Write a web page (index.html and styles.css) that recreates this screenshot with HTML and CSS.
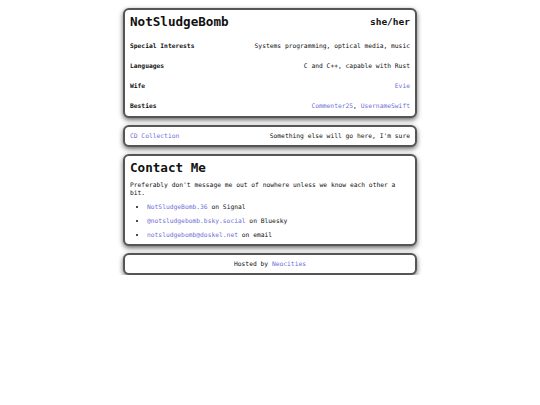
FILE: index.html
```html
<!DOCTYPE html>
<html>
<head>
<meta charset="utf-8">
<link rel="stylesheet" href="styles.css">
</head>
<body>
<main class="page">
  <section class="card profile">
    <header class="profile-head">
      <h1 class="name">NotSludgeBomb</h1>
      <span class="pronouns">she/her</span>
    </header>
    <div class="row"><span class="label">Special Interests</span><span class="value">Systems programming, optical media, music</span></div>
    <div class="row"><span class="label">Languages</span><span class="value">C and C++, capable with Rust</span></div>
    <div class="row"><span class="label">Wife</span><span class="value"><a href="#">Evie</a></span></div>
    <div class="row"><span class="label">Besties</span><span class="value"><a href="#">Commenter25</a>, <a href="#">UsernameSwift</a></span></div>
  </section>
  <section class="card strip">
    <a href="#">CD Collection</a>
    <span>Something else will go here, I'm sure</span>
  </section>
  <section class="card contact">
    <h2 class="heading">Contact Me</h2>
    <p class="intro">Preferably don't message me out of nowhere unless we know each other a bit.</p>
    <ul class="links">
      <li><a href="#">NotSludgeBomb.36</a> on Signal</li>
      <li><a href="#">@notsludgebomb.bsky.social</a> on Bluesky</li>
      <li><a href="#">notsludgebomb@doskel.net</a> on email</li>
    </ul>
  </section>
  <footer class="card footer">Hosted by <a href="#">Neocities</a></footer>
</main>
</body>
</html>
```
FILE: styles.css
```css
html, body {
  margin: 0;
  padding: 0;
  background: #fff;
}
body {
  font-family: "DejaVu Sans Mono", monospace;
  font-size: 6.3px;
  line-height: 8px;
  color: #111;
}
a {
  color: #6f6fd6;
  text-decoration: none;
}
.page {
  width: 294px;
  margin: 8px auto 0;
  display: flex;
  flex-direction: column;
  gap: 7px;
}
.card {
  border: 2px solid #555;
  border-radius: 6px;
  box-shadow: 0 2px 5px rgba(0, 0, 0, 0.6);
  background: #fff;
  padding: 5px 5px;
}
.profile {
  display: flex;
  flex-direction: column;
  gap: 12px;
  padding: 4px 5px 6px;
}
.profile-head {
  display: flex;
  justify-content: space-between;
  align-items: center;
  height: 16px;
}
.name {
  margin: 0;
  font-size: 12.6px;
  line-height: 16px;
  font-weight: bold;
}
.pronouns {
  font-size: 9.5px;
  font-weight: bold;
}
.row {
  display: flex;
  justify-content: space-between;
}
.label {
  font-weight: bold;
}
.strip {
  display: flex;
  justify-content: space-between;
}
.contact {
  padding: 4px 5px 5px;
}
.heading {
  margin: 0;
  font-size: 12.6px;
  line-height: 16px;
  font-weight: bold;
}
.intro {
  margin: 5px 0 0;
}
.links {
  margin: 6px 0 0;
  padding-left: 17px;
  display: flex;
  flex-direction: column;
  gap: 6px;
}
.footer {
  text-align: center;
}
```
